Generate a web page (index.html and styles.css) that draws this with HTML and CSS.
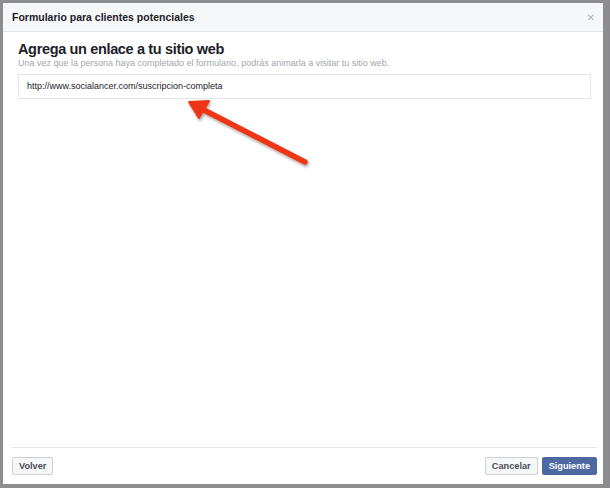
FILE: index.html
```html
<!DOCTYPE html>
<html lang="es">
<head>
<meta charset="utf-8">
<link rel="stylesheet" href="styles.css">
</head>
<body>
<div class="dialog">
  <div class="header">
    <span class="title">Formulario para clientes potenciales</span>
    <span class="close">&#x2715;</span>
  </div>
  <div class="content">
    <h1 class="heading">Agrega un enlace a tu sitio web</h1>
    <p class="sub">Una vez que la persona haya completado el formulario, podrás animarla a visitar tu sitio web.</p>
    <div class="input">http://www.socialancer.com/suscripcion-completa</div>
  </div>
  <div class="footer">
    <button class="btn">Volver</button>
    <div class="right">
      <button class="btn">Cancelar</button>
      <button class="btn primary">Siguiente</button>
    </div>
  </div>
</div>
<svg class="arrow" width="610" height="488" viewBox="0 0 610 488">
  <defs>
    <filter id="sh" x="-20%" y="-20%" width="140%" height="140%">
      <feDropShadow dx="1" dy="2" stdDeviation="1.5" flood-color="#000" flood-opacity="0.35"/>
    </filter>
  </defs>
  <g filter="url(#sh)" fill="#ee3516" stroke="#ee3516">
    <line x1="305" y1="162" x2="200" y2="108" stroke-width="5.5" stroke-linecap="round"/>
    <polygon points="189,102 209,101 199,118" stroke-width="2" stroke-linejoin="round"/>
  </g>
</svg>
</body>
</html>
```
FILE: styles.css
```css
html, body {
  margin: 0;
  padding: 0;
}
body {
  width: 610px;
  height: 488px;
  background: #8d8d8f;
  font-family: "Liberation Sans", Arial, sans-serif;
  position: relative;
  overflow: hidden;
  padding: 3px 7px 4px 3px;
  box-sizing: border-box;
}
.dialog {
  background: #fff;
  height: 481px;
  display: flex;
  flex-direction: column;
}
.header {
  height: 28px;
  background: #f6f7f9;
  border-bottom: 1px solid #e5e5e5;
  display: flex;
  align-items: center;
  justify-content: space-between;
  padding: 0 8px 0 9px;
  box-sizing: content-box;
}
.title {
  font-size: 10.5px;
  font-weight: bold;
  color: #1d2129;
}
.close {
  font-size: 10px;
  color: #b0b3b8;
  font-family: "DejaVu Sans", sans-serif;
}
.content {
  flex: 1;
  padding: 9px 12px 0 15px;
}
.heading {
  margin: 0;
  font-size: 14.5px;
  letter-spacing: -0.35px;
  line-height: 16px;
  font-weight: bold;
  color: #1d2129;
}
.sub {
  margin: 0;
  font-size: 9px;
  line-height: 12px;
  color: #a3a6ab;
}
.input {
  margin-top: 5px;
  height: 23px;
  border: 1px solid #e5e6e9;
  font-size: 9px;
  line-height: 23px;
  color: #1d2129;
  padding-left: 8px;
}
.footer {
  margin: 0 6px 0 9px;
  border-top: 1px solid #e5e5e5;
  display: flex;
  align-items: flex-start;
  justify-content: space-between;
  padding-top: 9px;
  box-sizing: border-box;
  height: 37px;
}
.right {
  display: flex;
  gap: 4px;
}
.btn {
  font-family: "Liberation Sans", Arial, sans-serif;
  font-size: 9.2px;
  font-weight: bold;
  color: #4b4f56;
  background: #f6f7f9;
  border: 1px solid #ced0d4;
  border-radius: 2px;
  height: 18px;
  padding: 0 6px;
  line-height: 16px;
  margin: 0;
}
.btn.primary {
  background: #4e69a2;
  border-color: #4e69a2;
  color: #fff;
  padding: 0 6px;
}
.arrow {
  position: absolute;
  left: 0;
  top: 0;
  pointer-events: none;
}
```
